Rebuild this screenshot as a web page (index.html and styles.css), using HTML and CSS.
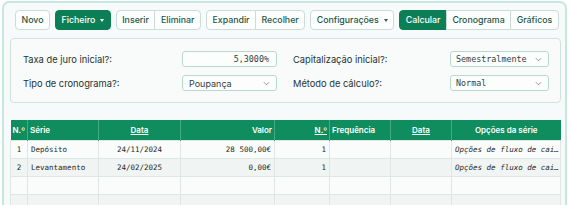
FILE: index.html
```html
<!DOCTYPE html>
<html lang="pt">
<head>
<meta charset="utf-8">
<link rel="stylesheet" href="styles.css">
</head>
<body>
<div class="card">
  <div class="toolbar">
    <button class="btn">Novo</button>
    <button class="btn primary">Ficheiro <span class="caret light"></span></button>
    <div class="group">
      <button class="btn">Inserir</button><button class="btn">Eliminar</button>
    </div>
    <div class="group">
      <button class="btn">Expandir</button><button class="btn">Recolher</button>
    </div>
    <button class="btn">Configurações <span class="caret"></span></button>
    <div class="group">
      <button class="btn primary">Calcular</button><button class="btn">Cronograma</button><button class="btn">Gráficos</button>
    </div>
  </div>

  <div class="panel">
    <div class="field">
      <span class="label">Taxa de juro inicial?:</span>
      <div class="input mono">5,3000%</div>
    </div>
    <div class="field">
      <span class="label">Capitalização inicial?:</span>
      <div class="select wide mono">Semestralmente<svg class="chev" viewBox="0 0 8 5"><path d="M1 1l3 3 3-3"/></svg></div>
    </div>
    <div class="field">
      <span class="label">Tipo de cronograma?:</span>
      <div class="select">Poupança<svg class="chev" viewBox="0 0 8 5"><path d="M1 1l3 3 3-3"/></svg></div>
    </div>
    <div class="field">
      <span class="label">Método de cálculo?:</span>
      <div class="select wide mono">Normal<svg class="chev" viewBox="0 0 8 5"><path d="M1 1l3 3 3-3"/></svg></div>
    </div>
  </div>

  <table class="grid">
    <colgroup>
      <col class="c1"><col class="c2"><col class="c3"><col class="c4"><col class="c5"><col class="c6"><col class="c7"><col class="c8">
    </colgroup>
    <thead>
      <tr>
        <th class="l">N.º</th>
        <th class="l">Série</th>
        <th class="c u">Data</th>
        <th class="r">Valor</th>
        <th class="r u">N.º</th>
        <th class="l">Frequência</th>
        <th class="c u">Data</th>
        <th class="c">Opções da série</th>
      </tr>
    </thead>
    <tbody>
      <tr>
        <td class="c">1</td><td>Depósito</td><td class="c">24/11/2024</td><td class="r">28 500,00€</td><td class="r">1</td><td></td><td></td><td class="it">Opções de fluxo de cai…</td>
      </tr>
      <tr class="alt">
        <td class="c">2</td><td>Levantamento</td><td class="c">24/02/2025</td><td class="r">0,00€</td><td class="r">1</td><td></td><td></td><td class="it">Opções de fluxo de cai…</td>
      </tr>
      <tr>
        <td></td><td></td><td></td><td></td><td></td><td></td><td></td><td></td>
      </tr>
      <tr class="alt">
        <td></td><td></td><td></td><td></td><td></td><td></td><td></td><td></td>
      </tr>
    </tbody>
  </table>
</div>
</body>
</html>
```

FILE: styles.css
```css
* { box-sizing: border-box; }
html, body { margin: 0; background: #ffffff; overflow: hidden; }
body {
  font-family: Inter, "Noto Sans", sans-serif;
  color: #2c3a35;
  width: 570px;
  height: 205px;
  padding: 1px 3px 0 2px;
}
.card {
  border: 2px solid #c6e7dc;
  border-bottom: none;
  border-radius: 7px 7px 0 0;
  background: #f7fafa;
  padding: 7px 5px 0 6px;
  height: 204px;
  overflow: hidden;
}
.toolbar {
  display: flex;
  gap: 5px;
  padding-left: 5px;
  height: 20px;
}
.btn {
  font-family: Inter, sans-serif;
  font-size: 8.8px;
  font-weight: 500;
  height: 20px;
  padding: 0 5.5px;
  border: 1px solid #cbdcd6;
  border-radius: 4px;
  background: #fdfefe;
  color: #245644;
  display: inline-flex;
  align-items: center;
  gap: 5px;
  line-height: 1;
  white-space: nowrap;
}
.btn.primary {
  background: #0c7f57;
  border-color: #0c7f57;
  color: #ffffff;
}
.group { display: flex; }
.group .btn { border-radius: 0; margin-left: -1px; }
.group .btn:first-child { border-radius: 4px 0 0 4px; margin-left: 0; }
.group .btn:last-child { border-radius: 0 4px 4px 0; }
.caret {
  width: 0; height: 0;
  border-left: 2.5px solid transparent;
  border-right: 2.5px solid transparent;
  border-top: 3px solid #3d5a50;
}
.caret.light { border-top-color: #ffffff; }

.panel {
  margin-top: 8px;
  border: 1px solid #cfe3dc;
  border-radius: 4px;
  background: #f9fbfb;
  padding: 12px 12px 11px 12px;
  display: grid;
  grid-template-columns: 254px 256px;
  column-gap: 16px;
  row-gap: 8px;
  width: 551px;
}
.field {
  display: flex;
  align-items: center;
  justify-content: space-between;
  height: 16px;
}
.label { font-size: 9.3px; color: #26332f; }
.input, .select {
  height: 16px;
  width: 95px;
  border: 1px solid #b9d9cd;
  border-radius: 3px;
  background: #fcfefd;
  font-size: 9px;
  color: #33403c;
  display: flex;
  align-items: center;
  padding: 0 8px;
}
.input { justify-content: flex-end; padding-right: 7px; }
.select { justify-content: space-between; padding-right: 6px; font-family: Inter, sans-serif; padding-left: 6px; }
.select.wide { width: 99px; padding-left: 5px; }
.mono { font-family: "DejaVu Sans Mono", "Liberation Mono", monospace; font-size: 8.4px; }
.chev { width: 7px; height: 5px; fill: none; stroke: #7d8a86; stroke-width: 1; }

.grid {
  margin-top: 17px;
  width: 550px;
  border-collapse: collapse;
  table-layout: fixed;
}
.c1 { width: 17px; } .c2 { width: 71px; } .c3 { width: 82px; } .c4 { width: 94px; }
.c5 { width: 55px; } .c6 { width: 61px; } .c7 { width: 61px; } .c8 { width: 109px; }
th {
  background: #0f8d5e;
  color: #ffffff;
  font-size: 8px;
  font-weight: 600;
  height: 20px;
  padding: 0 2px;
  border-left: 1px solid #45a983;
  white-space: nowrap;
  overflow: hidden;
}
th:first-child { border-left: none; }
th.u { text-decoration: underline; text-underline-offset: 1px; }
td {
  height: 18px;
  padding: 0 3px;
  border: 1px solid #dfe6e4;
  background: #fafcfc;
  font-family: "DejaVu Sans Mono", "Liberation Mono", monospace;
  font-size: 7.5px;
  color: #1f2926;
  white-space: nowrap;
  overflow: hidden;
}
td:first-child { text-align: center; }
tr.alt td { background: #f0f4f3; }
.l { text-align: left; }
.c { text-align: center; }
.r { text-align: right; }
.it { font-style: italic; }
```
